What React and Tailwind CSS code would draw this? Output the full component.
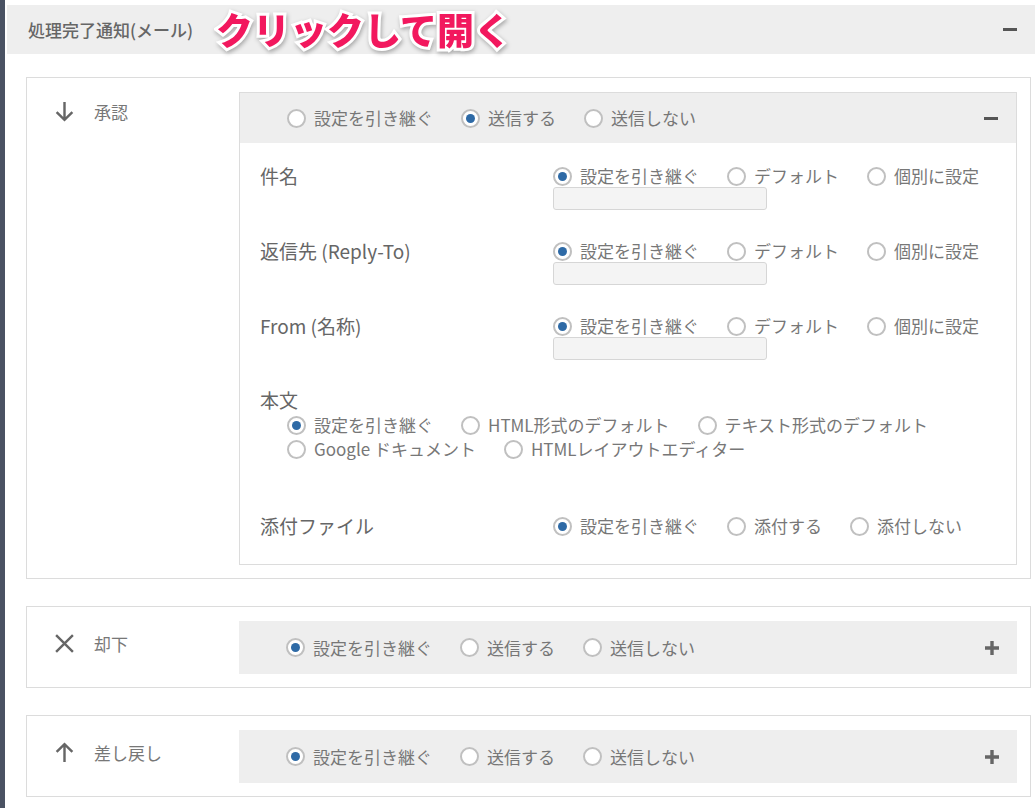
import { useState } from "react";

const FONT = "font-['Noto_Sans_CJK_JP','Noto_Sans',sans-serif]";

const INHERIT = "設定を引き継ぐ";

function Radio({ label, checked, onSelect }) {
  return (
    <label className="flex items-center gap-[8px] cursor-pointer whitespace-nowrap" onClick={onSelect}>
      <span className="flex h-[19px] w-[19px] shrink-0 items-center justify-center rounded-full border-2 border-[#c0c0c0] bg-white">
        {checked && <span className="h-[9px] w-[9px] rounded-full bg-[#2e6aa6]" />}
      </span>
      <span>{label}</span>
    </label>
  );
}

function RadioGroup({ options, value, onChange }) {
  return (
    <div className="flex items-center gap-[28px]">
      {options.map((opt) => (
        <Radio key={opt} label={opt} checked={value === opt} onSelect={() => onChange(opt)} />
      ))}
    </div>
  );
}

function Minus() {
  return <span className="block h-[3px] w-[14px] bg-[#555]" />;
}

function Plus() {
  return (
    <svg width="14" height="14" viewBox="0 0 14 14">
      <path d="M7 0v14M0 7h14" stroke="#666" strokeWidth="3.4" />
    </svg>
  );
}

function ActionIcon({ kind }) {
  const common = { fill: "none", stroke: "#666", strokeWidth: 2.3, strokeLinecap: "butt" };
  if (kind === "down") {
    return (
      <svg width="21" height="21" viewBox="0 0 20 20" {...common}>
        <path d="M10 1v17M2.5 10.5 10 18l7.5-7.5" />
      </svg>
    );
  }
  if (kind === "up") {
    return (
      <svg width="21" height="21" viewBox="0 0 20 20" {...common}>
        <path d="M10 19V2M2.5 9.5 10 2l7.5 7.5" />
      </svg>
    );
  }
  return (
    <svg width="21" height="21" viewBox="0 0 20 20" {...common}>
      <path d="M2 2l16 16M18 2 2 18" />
    </svg>
  );
}

const SEND = [INHERIT, "送信する", "送信しない"];
const FIELD = [INHERIT, "デフォルト", "個別に設定"];

function FieldRow({ label }) {
  const [v, setV] = useState(INHERIT);
  return (
    <div className="flex">
      <div className="w-[293px] text-[19px] leading-[22px] text-[#666]">{label}</div>
      <div>
        <RadioGroup options={FIELD} value={v} onChange={setV} />
        <div className="h-[23px] w-[214px] rounded-[3px] border border-[#d6d6d6] bg-[#f4f4f4]" />
      </div>
    </div>
  );
}

function MailDetail() {
  const [body, setBody] = useState(INHERIT);
  const [attach, setAttach] = useState(INHERIT);
  const bodyOpts = [INHERIT, "HTML形式のデフォルト", "テキスト形式のデフォルト"];
  const bodyOpts2 = ["Google ドキュメント", "HTMLレイアウトエディター"];
  return (
    <div className="flex flex-col px-[20px] pt-[22px] pb-[27px]">
      <div className="flex flex-col gap-[30px]">
        <FieldRow label="件名" />
        <FieldRow label="返信先 (Reply-To)" />
        <FieldRow label="From (名称)" />
      </div>
      <div className="mt-[28px] text-[19px] leading-[24px] text-[#666]">本文</div>
      <div className="mt-[2px] flex flex-col gap-[2px] pl-[27px]">
        <RadioGroup options={bodyOpts} value={body} onChange={setBody} />
        <RadioGroup options={bodyOpts2} value={body} onChange={setBody} />
      </div>
      <div className="mt-[55px] flex">
        <div className="w-[293px] text-[19px] leading-[22px] text-[#666]">添付ファイル</div>
        <RadioGroup options={[INHERIT, "添付する", "添付しない"]} value={attach} onChange={setAttach} />
      </div>
    </div>
  );
}

function ActionPanel({ icon, label, initial, openByDefault }) {
  const [open, setOpen] = useState(openByDefault);
  const [send, setSend] = useState(initial);
  return (
    <div className="flex border border-[#dcdcdc] bg-white">
      <div className={`flex w-[212px] shrink-0 items-start gap-[19px] pl-[27px] ${open ? "pt-[23px]" : "pt-[26px]"}`}>
        <ActionIcon kind={icon} />
        <span className="text-[17px] leading-[22px] text-[#777]">{label}</span>
      </div>
      <div className="mr-[13px] mt-[14px] mb-[13px] flex-1">
        <div className={open ? "border border-[#dcdcdc]" : ""}>
          <div className={`flex items-center justify-between bg-[#eeeeee] pl-[47px] pr-[18px] ${open ? "h-[50px]" : "h-[53px]"}`}>
            <RadioGroup options={SEND} value={send} onChange={setSend} />
            <button className="flex h-[14px] w-[14px] items-center justify-center" onClick={() => setOpen(!open)}>
              {open ? <Minus /> : <Plus />}
            </button>
          </div>
          {open && <MailDetail />}
        </div>
      </div>
    </div>
  );
}

export default function App() {
  const [open, setOpen] = useState(true);
  return (
    <div className={`flex h-[808px] w-[1035px] overflow-hidden bg-white ${FONT} text-[17px] leading-[22px] text-[#777]`}>
      <div className="w-[5px] shrink-0 bg-[#4a5263]" />
      <div className="flex-1 pl-[2px] pt-[5px]">
        <div className="flex h-[49px] items-center bg-[#eeeeee] pl-[21px] pr-[18px]">
          <span className="text-[17px] font-medium text-[#666]">処理完了通知(メール)</span>
          <span className="ml-[23px] text-[37px] font-black leading-none text-[#f2185e] [-webkit-text-stroke:6px_white] [paint-order:stroke_fill] drop-shadow-[1px_2px_2px_rgba(0,0,0,0.3)]">
            クリックして開く
          </span>
          <button className="ml-auto flex h-[14px] w-[14px] items-center" onClick={() => setOpen(!open)}>
            {open ? <Minus /> : <Plus />}
          </button>
        </div>
        {open && (
          <div className="ml-[19px] mr-[4px] mt-[23px] flex flex-col gap-[27px]">
            <ActionPanel icon="down" label="承認" initial="送信する" openByDefault />
            <ActionPanel icon="x" label="却下" initial={INHERIT} />
            <ActionPanel icon="up" label="差し戻し" initial={INHERIT} />
          </div>
        )}
      </div>
    </div>
  );
}
